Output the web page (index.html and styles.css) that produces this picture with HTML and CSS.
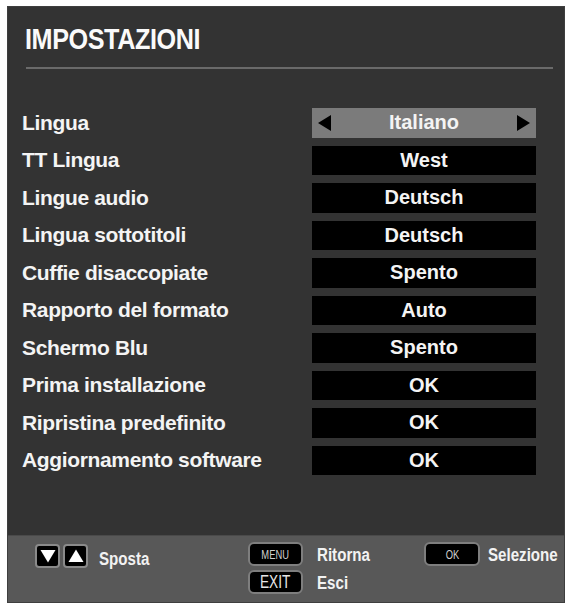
FILE: index.html
```html
<!DOCTYPE html>
<html lang="it">
<head>
<meta charset="utf-8">
<title>Impostazioni</title>
<link rel="stylesheet" href="styles.css">
</head>
<body>
<div class="panel">
  <div class="header">
    <h1 class="title">IMPOSTAZIONI</h1>
  </div>
  <div class="rule"></div>
  <div class="rows">
    <div class="row"><span class="label">Lingua</span><span class="value selected"><span class="arrow left"></span>Italiano<span class="arrow right"></span></span></div>
    <div class="row"><span class="label">TT Lingua</span><span class="value">West</span></div>
    <div class="row"><span class="label">Lingue audio</span><span class="value">Deutsch</span></div>
    <div class="row"><span class="label">Lingua sottotitoli</span><span class="value">Deutsch</span></div>
    <div class="row"><span class="label">Cuffie disaccopiate</span><span class="value">Spento</span></div>
    <div class="row"><span class="label">Rapporto del formato</span><span class="value">Auto</span></div>
    <div class="row"><span class="label">Schermo Blu</span><span class="value">Spento</span></div>
    <div class="row"><span class="label">Prima installazione</span><span class="value">OK</span></div>
    <div class="row"><span class="label">Ripristina predefinito</span><span class="value">OK</span></div>
    <div class="row"><span class="label">Aggiornamento software</span><span class="value">OK</span></div>
  </div>
  <div class="spacer"></div>
  <div class="footer">
    <div class="group nav">
      <span class="navkey"><svg width="16" height="14" viewBox="0 0 16 14"><path d="M0.5 1 L15.5 1 L8 13.5 Z" fill="#fff"/></svg></span>
      <span class="navkey"><svg width="16" height="14" viewBox="0 0 16 14"><path d="M0.5 13 L15.5 13 L8 0.5 Z" fill="#fff"/></svg></span>
      <span class="flabel sposta"><span class="cond">Sposta</span></span>
    </div>
    <div class="group keys">
      <span class="key"><span class="ktext small">MENU</span></span><span class="flabel"><span class="cond">Ritorna</span></span>
      <span class="key"><span class="ktext big">EXIT</span></span><span class="flabel"><span class="cond">Esci</span></span>
    </div>
    <div class="group ok">
      <span class="key okkey"><span class="ktext small">OK</span></span><span class="flabel"><span class="cond">Selezione</span></span>
    </div>
  </div>
</div>
</body>
</html>
```

FILE: styles.css
```css
* { box-sizing: border-box; }
html, body { margin: 0; padding: 0; background: #ffffff; }
body { font-family: "Liberation Sans", Arial, sans-serif; color: #fff; }

.panel {
  margin: 6px 0 0 7px;
  width: 558px;
  height: 597px;
  background: #333333;
  display: flex;
  flex-direction: column;
  border: 1px solid #3e3e3e;
}

.header { padding: 15px 0 0 17px; height: 60px; }
.title {
  margin: 0;
  font-size: 30px;
  font-weight: bold;
  line-height: 34px;
  letter-spacing: -0.5px;
  transform: scaleX(0.84);
  transform-origin: left center;
  color: #fafafa;
}

.rule {
  margin: 0 11px 0 18px;
  height: 2px;
  background: #6a6a6a;
}

.rows {
  margin-top: 39px;
  padding: 0 28px 0 14px;
  display: flex;
  flex-direction: column;
  gap: 8px;
}
.row {
  display: flex;
  align-items: center;
  justify-content: space-between;
  height: 29.5px;
}
.label {
  font-size: 21px;
  font-weight: bold;
  letter-spacing: -0.35px;
  color: #f4f4f4;
}
.value {
  position: relative;
  width: 224px;
  height: 100%;
  background: #000;
  display: flex;
  align-items: center;
  justify-content: center;
  font-size: 20px;
  font-weight: bold;
  color: #f4f4f4;
}
.value.selected { background: #7b7b7b; }
.arrow {
  position: absolute;
  top: 7px;
  width: 0; height: 0;
  border-top: 8px solid transparent;
  border-bottom: 8px solid transparent;
}
.arrow.left { left: 6px; border-right: 13px solid #000; }
.arrow.right { right: 6px; border-left: 13px solid #000; }

.spacer { flex: 1; }

.footer {
  height: 67px;
  background: #585858;
  border-top: 1px solid #4a4a4a;
  display: flex;
  align-items: flex-start;
  padding: 6px 0 0 27px;
  overflow: hidden;
}
.group { display: flex; align-items: center; flex-shrink: 0; }
.nav { width: 213px; gap: 3px; }
.navkey {
  width: 25px; height: 24px;
  background: #000;
  border: 2px solid #8a8a8a;
  border-radius: 4px;
  display: flex;
  align-items: center;
  justify-content: center;
}
.sposta { margin: 6px 0 0 8px; }
.flabel {
  font-size: 18px;
  font-weight: bold;
  color: #f2f2f2;
  line-height: 22px;
  white-space: nowrap;
}
.cond {
  display: inline-block;
  transform: scaleX(0.84);
  transform-origin: left center;
}
.keys {
  width: 176px;
  display: grid;
  grid-template-columns: 55px auto;
  column-gap: 14px;
  row-gap: 4px;
  align-items: center;
}
.keys .flabel { margin-top: 2px; }
.key {
  width: 55px; height: 24px;
  background: #000;
  border: 2px solid #7e7e7e;
  border-radius: 6px;
  display: flex;
  align-items: center;
  justify-content: center;
  color: #e6e6e6;
}
.ktext { display: inline-block; transform: scaleX(0.72); }
.ktext.small { font-size: 13px; color: #cfcfcf; }
.ktext.big { font-size: 19px; }
.ok { gap: 8px; }
.ok .flabel { margin-top: 2px; }
.okkey { width: 56px; }
```
